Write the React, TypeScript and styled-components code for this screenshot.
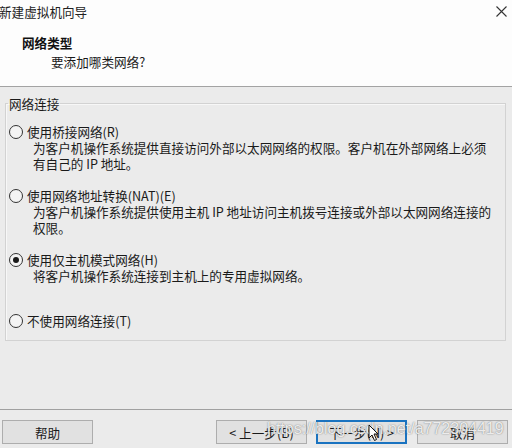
import React from "react";
import styled, { createGlobalStyle } from "styled-components";

const Global = createGlobalStyle`
  html, body { margin: 0; padding: 0; }
  body {
    width: 512px; height: 448px; overflow: hidden;
    font-family: "Noto Sans CJK SC", "Microsoft YaHei", sans-serif;
    font-size: 12.6px; color: #1a1a1a; background: #ebebeb;
  }
`;

const Window = styled.div`
  position: relative;
  width: 512px; height: 448px;
  display: flex; flex-direction: column;
  background: #ebebeb;
`;

const Header = styled.div`
  height: 86px;
  background: #fdfdfd;
  border-bottom: 1px solid #a3a3a3;
  display: flex; flex-direction: column;
`;

const TitleBar = styled.div`
  height: 22px;
  display: flex; align-items: center; justify-content: space-between;
  padding: 0 5px 0 0;
`;

const TitleText = styled.span`
  line-height: 15px;
  color: #222;
  margin-left: -1px;
  margin-top: 1px;
`;

const CloseBtn = styled.svg`
  width: 11px; height: 11px;
`;

const HeaderTitle = styled.div`
  margin: 13px 0 0 22px;
  line-height: 15px;
  font-weight: bold;
  color: #111;
`;

const HeaderSub = styled.div`
  margin: 4px 0 0 51px;
  line-height: 15px;
  color: #1a1a1a;
`;

const Body = styled.div`
  flex: 1;
  padding: 9px 6px 0 5px;
`;

const Group = styled.fieldset`
  margin: 0;
  padding: 13px 2px 12px 2px;
  border: 1px solid #d2d2d2;
  box-shadow: inset 1px 1px 0 #f7f7f7;
  min-width: 0;
`;

const Legend = styled.legend`
  padding: 0 1px;
  margin-left: 0;
  line-height: 15px;
  color: #1a1a1a;
`;

const Option = styled.div<{ $gap: number }>`
  margin-top: ${(p) => p.$gap}px;
  display: flex; flex-direction: column;
`;

const OptionLabel = styled.label`
  display: flex; align-items: center;
  line-height: 15px;
  white-space: nowrap;
`;

const RadioCircle = styled.span<{ $checked?: boolean }>`
  width: 12px; height: 12px;
  border: 1px solid #333;
  border-radius: 50%;
  background: #f4f4f4;
  margin: 0 4px 0 1px;
  display: flex; align-items: center; justify-content: center;
  flex: none;
  &::after {
    content: "";
    display: ${(p) => (p.$checked ? "block" : "none")};
    width: 6px; height: 6px; border-radius: 50%;
    background: #1a1a1a;
  }
`;

const Desc = styled.div`
  margin: 1px 0 0 25px;
  line-height: 15px;
  white-space: nowrap;
`;

const Footer = styled.div`
  height: 39px;
  border-top: 1px solid #a0a0a0;
  padding: 10px 4px 0 2px;
  display: flex;
  align-items: flex-start;
  box-sizing: border-box;
`;

const Spacer = styled.div`
  flex: 1;
`;

const Button = styled.button<{ $focused?: boolean; $ml?: number }>`
  width: 91px; height: 24px;
  margin-left: ${(p) => p.$ml ?? 0}px;
  box-sizing: border-box;
  background: #e1e1e1;
  border: ${(p) => (p.$focused ? "2px solid #1a73c0" : "1px solid #adadad")};
  font-family: inherit; font-size: 12.6px; color: #1a1a1a;
  padding: 0;
  line-height: 15px;
  display: flex; align-items: center; justify-content: center;
  white-space: nowrap;
`;

const Watermark = styled.div`
  position: absolute;
  left: 267px; top: 420px;
  font-family: "Liberation Sans", Arial, sans-serif;
  font-size: 16px;
  color: rgba(255, 255, 255, 0.85);
  text-shadow: 0 0 1px rgba(90, 90, 90, 0.7), 0 0 2px rgba(120, 120, 120, 0.4);
  white-space: nowrap;
  pointer-events: none;
`;

const Cursor = styled.svg`
  position: absolute;
  left: 368px; top: 424px;
  width: 12px; height: 18px;
`;

const options = [
  {
    label: "使用桥接网络(R)",
    lines: ["为客户机操作系统提供直接访问外部以太网网络的权限。客户机在外部网络上必须", "有自己的 IP 地址。"],
    gap: 0,
  },
  {
    label: "使用网络地址转换(NAT)(E)",
    lines: ["为客户机操作系统提供使用主机 IP 地址访问主机拨号连接或外部以太网网络连接的", "权限。"],
    gap: 17,
  },
  {
    label: "使用仅主机模式网络(H)",
    lines: ["将客户机操作系统连接到主机上的专用虚拟网络。"],
    gap: 17,
    checked: true,
  },
  { label: "不使用网络连接(T)", lines: [], gap: 30 },
];

export default function App() {
  return (
    <Window>
      <Global />
      <Header>
        <TitleBar>
          <TitleText>新建虚拟机向导</TitleText>
          <CloseBtn viewBox="0 0 11 11">
            <path d="M0.5 0.5 L10.5 10.5 M10.5 0.5 L0.5 10.5" stroke="#333" strokeWidth="1.1" fill="none" />
          </CloseBtn>
        </TitleBar>
        <HeaderTitle>网络类型</HeaderTitle>
        <HeaderSub>要添加哪类网络?</HeaderSub>
      </Header>
      <Body>
        <Group>
          <Legend>网络连接</Legend>
          {options.map((o) => (
            <Option key={o.label} $gap={o.gap}>
              <OptionLabel>
                <RadioCircle $checked={o.checked} />
                {o.label}
              </OptionLabel>
              {o.lines.map((l) => (
                <Desc key={l}>{l}</Desc>
              ))}
            </Option>
          ))}
        </Group>
      </Body>
      <Footer>
        <Button>帮助</Button>
        <Spacer />
        <Button>&lt; 上一步(B)</Button>
        <Button $focused $ml={9}>下一步(N) &gt;</Button>
        <Button $ml={10}>取消</Button>
      </Footer>
      <Watermark>https://blog.csdn.net/a772304419</Watermark>
      <Cursor viewBox="0 0 12 18">
        <path d="M1 1 L1 14 L4 11 L6.5 16.5 L8.5 15.5 L6 10 L10 10 Z" fill="#fff" stroke="#111" strokeWidth="1" />
      </Cursor>
    </Window>
  );
}
